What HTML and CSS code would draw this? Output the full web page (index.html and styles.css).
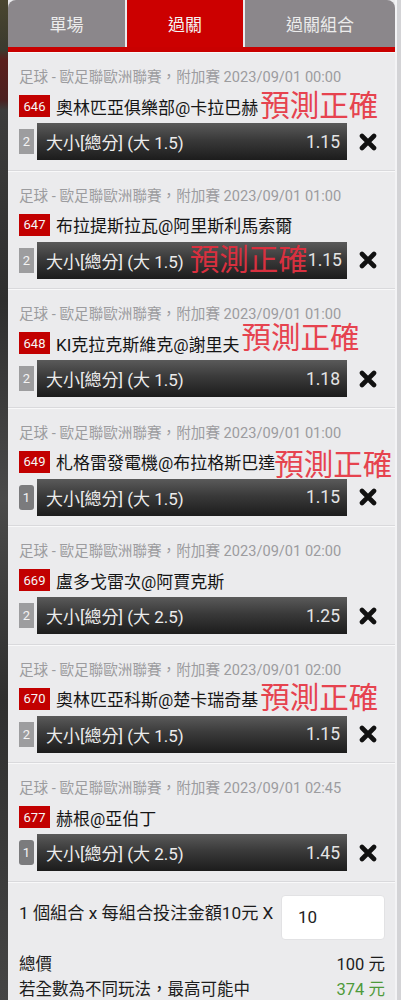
FILE: index.html
```html
<!DOCTYPE html>
<html lang="zh-Hant">
<head>
<meta charset="utf-8">
<title>過關</title>
<link rel="stylesheet" href="styles.css">
</head>
<body>
<div class="page">
  <div class="edge-left"></div>
  <main class="panel">
    <nav class="tabs">
      <div class="tab tab-single">單場</div>
      <div class="tab tab-active">過關</div>
      <div class="tab tab-combo">過關組合</div>
    </nav>
    <div class="tab-bar"></div>

    <section class="card">
      <div class="meta">足球 - 歐足聯歐洲聯賽，附加賽 2023/09/01 00:00</div>
      <div class="match"><span class="code">646</span><span class="teams">奧林匹亞俱樂部@卡拉巴赫<span class="stamp">預測正確</span></span></div>
      <div class="bet">
        <span class="count">2</span>
        <div class="bar"><span class="pick">大小[總分] (大 1.5)</span><span class="odds">1.15</span></div>
        <svg class="remove" viewBox="0 0 18 18" width="18" height="18"><path d="M3 3L15 15M15 3L3 15"/></svg>
      </div>
    </section>

    <section class="card">
      <div class="meta">足球 - 歐足聯歐洲聯賽，附加賽 2023/09/01 01:00</div>
      <div class="match"><span class="code">647</span><span class="teams">布拉提斯拉瓦@阿里斯利馬索爾</span></div>
      <div class="bet">
        <span class="count">2</span>
        <div class="bar"><span class="pick">大小[總分] (大 1.5)<span class="stamp stamp-bar">預測正確</span></span><span class="odds">1.15</span></div>
        <svg class="remove" viewBox="0 0 18 18" width="18" height="18"><path d="M3 3L15 15M15 3L3 15"/></svg>
      </div>
    </section>

    <section class="card">
      <div class="meta">足球 - 歐足聯歐洲聯賽，附加賽 2023/09/01 01:00</div>
      <div class="match"><span class="code">648</span><span class="teams">KI克拉克斯維克@謝里夫<span class="stamp stamp-up">預測正確</span></span></div>
      <div class="bet">
        <span class="count">2</span>
        <div class="bar"><span class="pick">大小[總分] (大 1.5)</span><span class="odds">1.18</span></div>
        <svg class="remove" viewBox="0 0 18 18" width="18" height="18"><path d="M3 3L15 15M15 3L3 15"/></svg>
      </div>
    </section>

    <section class="card">
      <div class="meta">足球 - 歐足聯歐洲聯賽，附加賽 2023/09/01 01:00</div>
      <div class="match"><span class="code">649</span><span class="teams">札格雷發電機@布拉格斯巴達<span class="stamp stamp-down">預測正確</span></span></div>
      <div class="bet">
        <span class="count count-dark">1</span>
        <div class="bar"><span class="pick">大小[總分] (大 1.5)</span><span class="odds">1.15</span></div>
        <svg class="remove" viewBox="0 0 18 18" width="18" height="18"><path d="M3 3L15 15M15 3L3 15"/></svg>
      </div>
    </section>

    <section class="card">
      <div class="meta">足球 - 歐足聯歐洲聯賽，附加賽 2023/09/01 02:00</div>
      <div class="match"><span class="code">669</span><span class="teams">盧多戈雷次@阿賈克斯</span></div>
      <div class="bet">
        <span class="count">2</span>
        <div class="bar"><span class="pick">大小[總分] (大 2.5)</span><span class="odds">1.25</span></div>
        <svg class="remove" viewBox="0 0 18 18" width="18" height="18"><path d="M3 3L15 15M15 3L3 15"/></svg>
      </div>
    </section>

    <section class="card">
      <div class="meta">足球 - 歐足聯歐洲聯賽，附加賽 2023/09/01 02:00</div>
      <div class="match"><span class="code">670</span><span class="teams">奧林匹亞科斯@楚卡瑞奇基<span class="stamp">預測正確</span></span></div>
      <div class="bet">
        <span class="count">2</span>
        <div class="bar"><span class="pick">大小[總分] (大 1.5)</span><span class="odds">1.15</span></div>
        <svg class="remove" viewBox="0 0 18 18" width="18" height="18"><path d="M3 3L15 15M15 3L3 15"/></svg>
      </div>
    </section>

    <section class="card">
      <div class="meta">足球 - 歐足聯歐洲聯賽，附加賽 2023/09/01 02:45</div>
      <div class="match"><span class="code">677</span><span class="teams">赫根@亞伯丁</span></div>
      <div class="bet">
        <span class="count count-dark">1</span>
        <div class="bar"><span class="pick">大小[總分] (大 2.5)</span><span class="odds">1.45</span></div>
        <svg class="remove" viewBox="0 0 18 18" width="18" height="18"><path d="M3 3L15 15M15 3L3 15"/></svg>
      </div>
    </section>

    <section class="summary">
      <div class="stake">
        <span class="stake-label">1 個組合 x 每組合投注金額10元 X</span>
        <div class="stake-input">10</div>
      </div>
      <div class="line"><span>總價</span><span>100 元</span></div>
      <div class="line"><span>若全數為不同玩法，最高可能中</span><span class="win">374 元</span></div>
    </section>
  </main>
  <div class="edge-right"></div>
</div>
</body>
</html>
```

FILE: styles.css
```css
html, body {
  margin: 0;
  padding: 0;
}

body {
  font-family: Roboto, "Noto Sans CJK TC", sans-serif;
  background: #3a3a3a;
  overflow: hidden;
}

.page {
  display: flex;
  min-height: 1000px;
}

.edge-left {
  width: 8px;
  flex: none;
  background: linear-gradient(to bottom, #4a4630 0, #3a3a2e 50px, #5a1f1c 60px, #4a2020 100px, #3c3c3c 110px, #2e2e2e 300px, #4a4a4a 500px, #2f2f2f 700px, #444 1000px);
}

.panel {
  width: 387px;
  flex: none;
  background: #ebebed;
}

.edge-right {
  flex: 1;
  background: #d3d3d6;
  border-left: 2px solid #f3f3f5;
}

/* Tabs */
.tabs {
  display: flex;
  gap: 2px;
  height: 47px;
  background: #ebebed;
}

.tab {
  display: flex;
  align-items: center;
  justify-content: center;
  background: #8b878b;
  color: #ececec;
  font-size: 17px;
  padding-bottom: 1px;
  box-sizing: border-box;
}

.tab-single {
  width: 117px;
  border-top-left-radius: 8px;
}

.tab-active {
  width: 116px;
  background: #cc0000;
  color: #f4f4f4;
}

.tab-combo {
  flex: 1;
  border-top-right-radius: 8px;
}

.tab-bar {
  height: 5px;
  background: #c90000;
}

/* Cards */
.card {
  height: 118.5px;
  box-sizing: border-box;
  padding: 15px 0 0 11px;
  border-bottom: 1px solid #d9d9dc;
  box-shadow: inset 0 1px 0 #f8f8f9;
}

.meta {
  font-size: 14.6px;
  line-height: 20px;
  color: #9c9c9f;
  white-space: nowrap;
}

.match {
  display: flex;
  align-items: center;
  height: 22px;
  margin-top: 8px;
  white-space: nowrap;
}

.code {
  width: 31px;
  height: 22px;
  background: #c20000;
  color: #f6f6f6;
  font-size: 13px;
  display: flex;
  align-items: center;
  justify-content: center;
  flex: none;
}

.teams {
  margin-left: 6px;
  font-size: 17px;
  color: #151515;
}

.stamp {
  position: relative;
  top: 2px;
  margin-left: 2px;
  font-size: 29.5px;
  line-height: 0;
  color: #e6434f;
  font-weight: 400;
}

.stamp-up {
  top: -3px;
}

.stamp-down {
  top: 6px;
  margin-left: -1px;
}

.stamp-bar {
  top: 2px;
  margin-left: 6px;
  color: #d8303f;
}

.bet {
  display: flex;
  align-items: center;
  margin-top: 6px;
  height: 37px;
}

.count {
  width: 15px;
  height: 25px;
  flex: none;
  background: #9d9d9f;
  color: #f3f3f3;
  font-size: 13px;
  display: flex;
  align-items: center;
  justify-content: center;
}

.count-dark {
  background: #7b7b7d;
  border-radius: 3px;
}

.bar {
  margin-left: 3px;
  width: 310px;
  height: 37px;
  box-sizing: border-box;
  padding: 0 7px 0 9px;
  display: flex;
  align-items: center;
  justify-content: space-between;
  background: linear-gradient(to bottom, #5a5a5a 0%, #3a3a3a 45%, #1c1c1c 100%);
  color: #ececec;
  font-size: 17px;
  white-space: nowrap;
}

.odds {
  font-size: 17.5px;
  color: #e4e4e4;
}

.remove {
  margin-left: 12px;
  flex: none;
}

.remove path {
  stroke: #111;
  stroke-width: 4.6;
  stroke-linecap: round;
  fill: none;
}

/* Summary */
.summary {
  padding: 14px 10px 0 11px;
  box-shadow: inset 0 1px 0 #f8f8f9;
}

.stake {
  display: flex;
  align-items: flex-start;
  justify-content: space-between;
}

.stake-label {
  font-size: 17.2px;
  color: #1c1c1c;
  margin-top: 3px;
  white-space: nowrap;
}

.stake-input {
  width: 104px;
  height: 45px;
  box-sizing: border-box;
  background: #fff;
  border-radius: 4px;
  border: 1px solid #e2e2e4;
  font-size: 17px;
  color: #222;
  display: flex;
  align-items: center;
  padding-left: 16px;
  margin-top: -1px;
}

.line {
  display: flex;
  justify-content: space-between;
  font-size: 16.5px;
  color: #1c1c1c;
  line-height: 25px;
}

.stake + .line {
  margin-top: 12px;
}

.win {
  color: #4e9a3a;
}
```
